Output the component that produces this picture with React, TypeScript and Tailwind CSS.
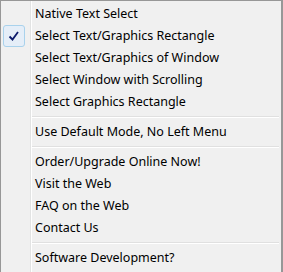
import React from 'react';

type Entry = { label: string; checked?: boolean } | 'sep';

const entries: Entry[] = [
  { label: 'Native Text Select' },
  { label: 'Select Text/Graphics Rectangle', checked: true },
  { label: 'Select Text/Graphics of Window' },
  { label: 'Select Window with Scrolling' },
  { label: 'Select Graphics Rectangle' },
  'sep',
  { label: 'Use Default Mode, No Left Menu' },
  'sep',
  { label: 'Order/Upgrade Online Now!' },
  { label: 'Visit the Web' },
  { label: 'FAQ on the Web' },
  { label: 'Contact Us' },
  'sep',
  { label: 'Software Development?' },
];

const Check = () => (
  <div className="w-[22px] h-[22px] ml-[2px] rounded-[3px] border border-[#a9d2ec] bg-[#e5eef8] flex items-center justify-center">
    <svg width="12" height="12" viewBox="0 0 12 12">
      <path d="M1.5 6.5 L4.5 9.5 L10 2" fill="none" stroke="#0c1a6b" strokeWidth="1.8" />
    </svg>
  </div>
);

export default function App() {
  return (
    <div
      className="w-[283px] h-[272px] bg-[#f0f0f0] border-l border-t border-r-2 border-[#979797] pt-[2px] relative overflow-hidden"
      style={{ fontFamily: '"Noto Sans", "Segoe UI", sans-serif' }}
    >
      {/* gutter line */}
      <div className="absolute top-0 bottom-0 left-[29px] w-[2px] border-l border-[#e2e3e3] bg-white" />
      {entries.map((e, i) =>
        e === 'sep' ? (
          <div key={i} className="h-[8px] flex items-center pl-[30px] pr-[2px]">
            <div className="w-full h-[2px] border-t border-[#e0e0e0] bg-white" />
          </div>
        ) : (
          <div key={i} className="h-[22px] flex items-center relative">
            <div className="w-[30px] shrink-0">{e.checked && <Check />}</div>
            <span className="pl-[4px] text-[12.5px] leading-none text-black whitespace-nowrap">{e.label}</span>
          </div>
        )
      )}
    </div>
  );
}
